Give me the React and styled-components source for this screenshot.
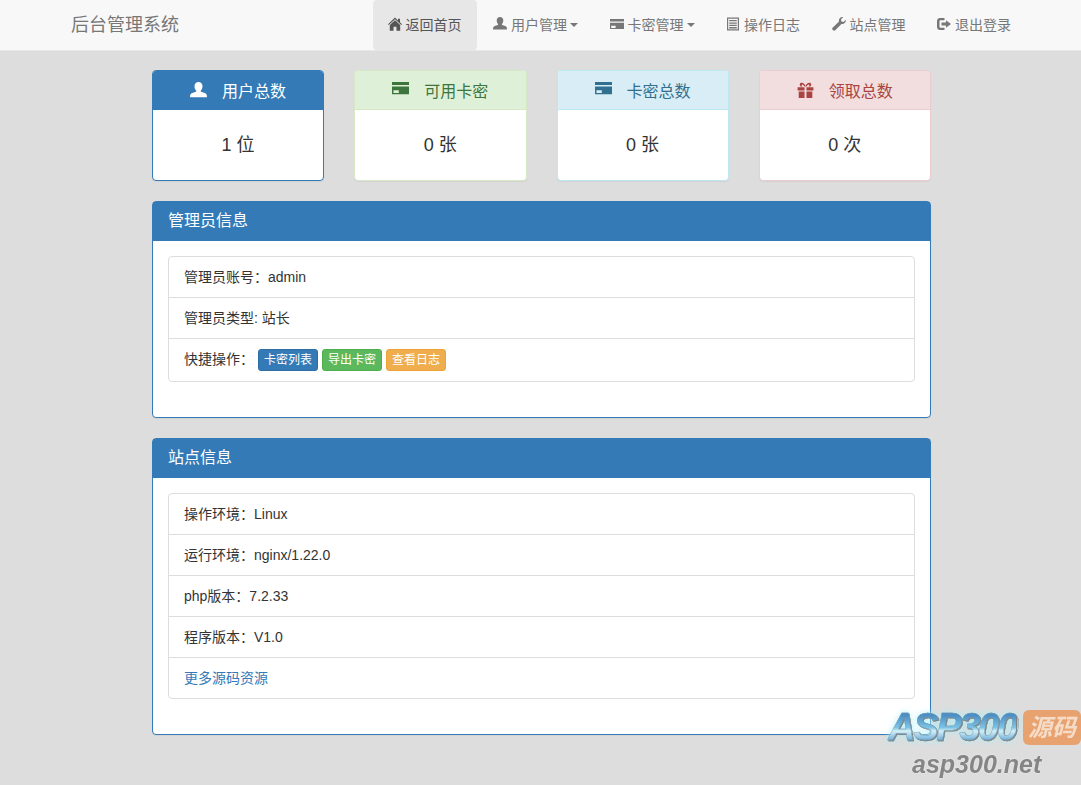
import styled, { createGlobalStyle } from 'styled-components';

const GlobalStyle = createGlobalStyle`
  * {
    box-sizing: border-box;
  }
  html, body {
    margin: 0;
    padding: 0;
  }
  body {
    background: #dddddd;
    color: #333;
    font-family: "Liberation Sans", "Noto Sans CJK SC", sans-serif;
    font-size: 14px;
    line-height: 20px;
  }
`;

const Icon = ({ name, size = 14, drop }) => (
  <IconSvg viewBox="0 0 14 14" $size={size} $drop={drop} aria-hidden="true">
    {name === 'home' && (
      <path d="M7 .6 10 3.400V1.800h2v3.500l2 1.900-.7.800L7 2.200.7 8 0 7.200ZM1.800 8 7 3.200 12.200 8v5.700H8.500V9.800h-3v3.900H1.800Z" />
    )}
    {name === 'user' && (
      <path d="M7 0c2 0 3.300 1.400 3.300 3.500 0 1.500-.6 2.700-1.300 3.500-.3.400-.2.800.2 1l3 1.100c1.200.5 1.800 1.100 1.800 3.400H0c0-2.300.6-2.900 1.800-3.400l3-1.100c.4-.2.5-.6.2-1C4.300 6.200 3.700 5 3.700 3.500 3.700 1.400 5 0 7 0Z" />
    )}
    {name === 'card' && (
      <path fillRule="evenodd" d="M0 0h14v2.400H0Zm0 3.700h14V10H0ZM1.200 6.800V9h4.400V6.800Z" />
    )}
    {name === 'list' && (
      <path fillRule="evenodd" d="M1 .5h12v13H1ZM2.200 1.700v10.600h9.600V1.700ZM3.200 3h7.600v1.300H3.200Zm0 2.400h7.600v1.300H3.200Zm0 2.400h7.600v1.300H3.200Zm0 2.300h7.600v1.300H3.200Z" />
    )}
    {name === 'wrench' && (
      <path d="M13.700 2.700c.3 1.300-.1 2.500-1 3.400-.9.800-2.100 1.100-3.200.8L3.200 13.300c-.6.600-1.500.6-2.100 0l-.5-.5c-.6-.6-.6-1.500 0-2.100L7 4.400c-.3-1.100 0-2.300.8-3.200.9-.9 2.100-1.300 3.300-1L8.900 2.400l.6 2 2.100.5Z" />
    )}
    {name === 'logout' && (
      <path fillRule="evenodd" d="M3 1h4.500v2.200H3.500c-.6 0-1 .4-1 1v5.600c0 .6.400 1 1 1h4V13H3c-1.700 0-3-1.300-3-3V4c0-1.700 1.300-3 3-3ZM9 3.300 14 7l-5 3.700V8.600H4.500V5.400H9Z" />
    )}
    {name === 'gift' && (
      <path fillRule="evenodd" d="M.5 4.300h5.700v2.600H.5Zm7.300 0h5.700v2.600H7.800ZM1.400 7.900h4.800v5.300H1.400Zm6.400 0h4.800v5.300H7.800ZM3.200.7c1.300-.5 2.800.5 3.800 2.500C8 1.200 9.500.2 10.800.7c1.300.6 1.200 2.300.2 3H9.200c.8-.4 1.200-1.100.9-1.500-.4-.4-1.700.3-2.300 1.500H6.200C5.600 2.500 4.300 1.800 3.900 2.200c-.3.400.1 1.100.9 1.500H3C2 3 1.900 1.300 3.200.7Z" />
    )}
  </IconSvg>
);

const IconSvg = styled.svg`
  display: inline-block;
  flex: none;
  width: ${(p) => p.$size}px;
  height: ${(p) => p.$size}px;
  margin-top: ${(p) => (p.$drop ? '3px' : '0')};
  fill: currentColor;
`;

const Navbar = styled.nav`
  display: flex;
  align-items: center;
  height: 51px;
  padding: 0 55px 0 71px;
  background: #f8f8f8;
  border-bottom: 1px solid #e7e7e7;
`;

const Brand = styled.a`
  font-size: 18px;
  line-height: 20px;
  color: #777;
`;

const NavList = styled.div`
  display: flex;
  gap: 1.5px;
  margin-left: auto;
`;

const NavItem = styled.a`
  display: flex;
  align-items: center;
  gap: 4px;
  height: 50px;
  padding: 0 15px;
  border-radius: 4px;
  color: ${(p) => (p.$active ? '#555' : '#777')};
  background: ${(p) => (p.$active ? '#e7e7e7' : 'transparent')};

  svg {
    margin-bottom: 2px;
  }
`;

const Caret = styled.span`
  width: 0;
  height: 0;
  margin-left: -1px;
  border-top: 4px solid currentColor;
  border-left: 4px solid transparent;
  border-right: 4px solid transparent;
`;

const Container = styled.main`
  width: 779px;
  margin: 0 0 0 152px;
  padding: 19px 0 50px;
`;

const StatGrid = styled.div`
  display: grid;
  grid-template-columns: repeat(4, 1fr);
  gap: 30px;
  margin-bottom: 20px;
`;

const tones = {
  primary: { border: '#337ab7', head: '#337ab7', text: '#fff' },
  success: { border: '#d6e9c6', head: '#dff0d8', text: '#3c763d' },
  info: { border: '#bce8f1', head: '#d9edf7', text: '#31708f' },
  danger: { border: '#ebccd1', head: '#f2dede', text: '#a94442' },
};

const StatCard = styled.section`
  height: 111px;
  background: #fff;
  border: 1px solid ${(p) => tones[p.$tone].border};
  border-radius: 4px;
  box-shadow: 0 1px 1px rgba(0, 0, 0, 0.05);
  overflow: hidden;
`;

const StatHead = styled.header`
  display: flex;
  justify-content: center;
  gap: 15px;
  height: 39px;
  padding-top: 11px;
  font-size: 16px;
  line-height: 20px;
  color: ${(p) => tones[p.$tone].text};
  background: ${(p) => tones[p.$tone].head};
  border-bottom: 1px solid ${(p) => tones[p.$tone].border};
`;

const StatValue = styled.div`
  padding-top: 25px;
  font-size: 18px;
  line-height: 20px;
  text-align: center;
`;

const Panel = styled.section`
  margin-bottom: 20px;
  background: #fff;
  border: 1px solid #337ab7;
  border-radius: 4px;
  box-shadow: 0 1px 1px rgba(0, 0, 0, 0.05);
`;

const PanelHead = styled.header`
  height: 39px;
  padding: 9px 15px;
  font-size: 16px;
  line-height: 20px;
  color: #fff;
  background: #337ab7;
`;

const PanelBody = styled.div`
  padding: 15px 15px 35px;
`;

const ListGroup = styled.ul`
  margin: 0;
  padding: 0;
  list-style: none;
  border: 1px solid #ddd;
  border-radius: 4px;
`;

const ListRow = styled.li`
  display: flex;
  align-items: flex-start;
  padding: 10px 15px;
  border-bottom: 1px solid #ddd;
  white-space: pre;

  &:last-child {
    border-bottom: none;
  }
`;

const Link = styled.a`
  color: #337ab7;
`;

const ActionGroup = styled.span`
  display: flex;
  gap: 4px;
  margin-left: 4px;
`;

const btnColors = {
  primary: ['#337ab7', '#2e6da4'],
  success: ['#5cb85c', '#4cae4c'],
  warning: ['#f0ad4e', '#eea236'],
};

const SmallButton = styled.a`
  height: 22px;
  padding: 0 5px;
  font-size: 12px;
  line-height: 20px;
  color: #fff;
  background: ${(p) => btnColors[p.$kind][0]};
  border: 1px solid ${(p) => btnColors[p.$kind][1]};
  border-radius: 3px;
`;

const Watermark = styled.aside`
  position: fixed;
  right: 0;
  bottom: 0;
  width: 193px;
  height: 75px;
`;

const WatermarkRow = styled.div`
  display: flex;
  align-items: center;
  justify-content: space-between;
  height: 35px;
`;

const WatermarkLogo = styled.span`
  font-size: 38px;
  font-weight: 700;
  font-style: italic;
  line-height: 35px;
  letter-spacing: -2.3px;
  color: transparent;
  background: linear-gradient(180deg, #4a8fc6 15%, #7cc4e6 50%, #d4eff8 60%, #5fa6d6 90%);
  -webkit-background-clip: text;
  background-clip: text;
  -webkit-text-stroke: 0.4px #7f93a0;
  filter: drop-shadow(1px 1px 0 #7c8388) drop-shadow(0 0 3px rgba(170, 240, 250, 0.9));
`;

const WatermarkBadge = styled.span`
  width: 58px;
  height: 35px;
  font-size: 24px;
  font-weight: 700;
  font-style: italic;
  line-height: 35px;
  text-align: center;
  color: #f5dcc8;
  background: #e8a26f;
  border-radius: 6px;
`;

const WatermarkSite = styled.div`
  margin: 5px 0 0 24px;
  font-size: 25px;
  font-weight: 700;
  font-style: italic;
  line-height: 28px;
  color: #858585;
  text-shadow: 0 0 2px #f2f2f2;
`;

const navItems = [
  { icon: 'home', label: '返回首页', active: true },
  { icon: 'user', label: '用户管理', caret: true },
  { icon: 'card', label: '卡密管理', caret: true, drop: true },
  { icon: 'list', label: '操作日志' },
  { icon: 'wrench', label: '站点管理' },
  { icon: 'logout', label: '退出登录' },
];

const stats = [
  { tone: 'primary', icon: 'user', label: '用户总数', value: '1 位' },
  { tone: 'success', icon: 'card', label: '可用卡密', value: '0 张' },
  { tone: 'info', icon: 'card', label: '卡密总数', value: '0 张' },
  { tone: 'danger', icon: 'gift', label: '领取总数', value: '0 次' },
];

const siteRows = ['操作环境：Linux', '运行环境：nginx/1.22.0', 'php版本：7.2.33', '程序版本：V1.0'];

const App = () => {
  return (
    <>
      <GlobalStyle />
      <Navbar>
        <Brand>后台管理系统</Brand>
        <NavList>
          {navItems.map((item) => (
            <NavItem key={item.label} $active={item.active}>
              <Icon name={item.icon} drop={item.drop} />
              {item.label}
              {item.caret && <Caret />}
            </NavItem>
          ))}
        </NavList>
      </Navbar>

      <Container>
        <StatGrid>
          {stats.map((stat) => (
            <StatCard key={stat.label} $tone={stat.tone}>
              <StatHead $tone={stat.tone}>
                <Icon name={stat.icon} size={17} />
                {stat.label}
              </StatHead>
              <StatValue>{stat.value}</StatValue>
            </StatCard>
          ))}
        </StatGrid>

        <Panel>
          <PanelHead>管理员信息</PanelHead>
          <PanelBody>
            <ListGroup>
              <ListRow>管理员账号：admin</ListRow>
              <ListRow>管理员类型: 站长</ListRow>
              <ListRow>
                快捷操作：
                <ActionGroup>
                  <SmallButton $kind="primary">卡密列表</SmallButton>
                  <SmallButton $kind="success">导出卡密</SmallButton>
                  <SmallButton $kind="warning">查看日志</SmallButton>
                </ActionGroup>
              </ListRow>
            </ListGroup>
          </PanelBody>
        </Panel>

        <Panel>
          <PanelHead>站点信息</PanelHead>
          <PanelBody>
            <ListGroup>
              {siteRows.map((row) => (
                <ListRow key={row}>{row}</ListRow>
              ))}
              <ListRow>
                <Link>更多源码资源</Link>
              </ListRow>
            </ListGroup>
          </PanelBody>
        </Panel>
      </Container>

      <Watermark>
        <WatermarkRow>
          <WatermarkLogo>ASP300</WatermarkLogo>
          <WatermarkBadge>源码</WatermarkBadge>
        </WatermarkRow>
        <WatermarkSite>asp300.net</WatermarkSite>
      </Watermark>
    </>
  );
};

export default App;
